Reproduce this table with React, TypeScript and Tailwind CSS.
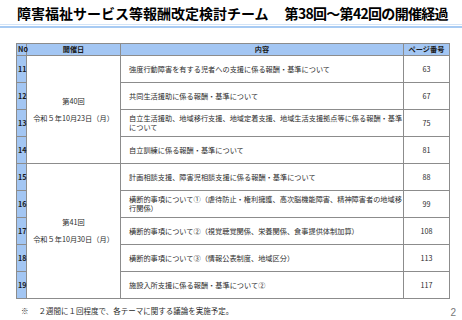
import React from "react";

type Row = { no: number; content: React.ReactNode; page: string };

const rowsA: Row[] = [
  { no: 11, content: "強度行動障害を有する児者への支援に係る報酬・基準について", page: "63" },
  { no: 12, content: "共同生活援助に係る報酬・基準について", page: "67" },
  {
    no: 13,
    content: (
      <>
        自立生活援助、地域移行支援、地域定着支援、地域生活支援拠点等に係る報酬・基準
        <br />
        について
      </>
    ),
    page: "75",
  },
  { no: 14, content: "自立訓練に係る報酬・基準について", page: "81" },
];

const rowsB: Row[] = [
  { no: 15, content: "計画相談支援、障害児相談支援に係る報酬・基準について", page: "88" },
  {
    no: 16,
    content: (
      <>
        横断的事項について①（虐待防止・権利擁護、高次脳機能障害、精神障害者の地域移
        <br />
        行関係）
      </>
    ),
    page: "99",
  },
  { no: 17, content: "横断的事項について②（視覚聴覚関係、栄養関係、食事提供体制加算）", page: "108" },
  { no: 18, content: "横断的事項について③（情報公表制度、地域区分）", page: "113" },
  { no: 19, content: "施設入所支援に係る報酬・基準について②", page: "117" },
];

const cell = "border border-[#8c8c8c]";

function Body({ rows, date }: { rows: Row[]; date: [string, string] }) {
  return (
    <>
      {rows.map((r, i) => (
        <tr key={r.no} className="h-[27px]">
          <td className={`${cell} bg-[#a3c6f3] pl-[1px] align-middle font-bold text-[#1a1a1a]`}>{r.no}</td>
          {i === 0 && (
            <td rowSpan={rows.length} className={`${cell} text-center align-middle`}>
              <div className="flex flex-col items-center gap-[8px]">
                <span>{date[0]}</span>
                <span>{date[1]}</span>
              </div>
            </td>
          )}
          <td className={`${cell} pl-[8px] leading-[9px] whitespace-nowrap`}>{r.content}</td>
          <td className={`${cell} text-center`}>{r.page}</td>
        </tr>
      ))}
    </>
  );
}

export default function App() {
  return (
    <div
      className="w-[462px] h-[320px] bg-white overflow-hidden"
      style={{ fontFamily: '"Noto Sans CJK JP", "Noto Sans", sans-serif' }}
    >
      <div className="pl-[17px] pt-[6px] h-[24px] text-[14px] leading-[14px] font-bold text-black whitespace-nowrap">
        障害福祉サービス等報酬改定検討チーム<span className="inline-block w-[16px]" />
        <span className="tracking-[-0.7px]">第38回～第42回の開催経過</span>
      </div>
      <div className="h-[1px] bg-[#d3e4f7]" />
      <div className="h-[1px]" />
      <div className="h-[2px] bg-[#a8cbf3]" />
      <div className="pl-[16px] pt-[15px]">
        <table className="border-collapse table-fixed w-[433px] text-[7.2px] leading-[9px] text-[#2b2b2b]">
          <colgroup>
            <col className="w-[10px]" />
            <col className="w-[94px]" />
            <col className="w-[283px]" />
            <col className="w-[46px]" />
          </colgroup>
          <thead>
            <tr className="h-[12px] bg-[#a3c6f3] font-bold text-[#1a1a1a]">
              <th className={`${cell} text-left pl-[1px]`}>No</th>
              <th className={cell}>開催日</th>
              <th className={cell}>内容</th>
              <th className={cell}>ページ番号</th>
            </tr>
          </thead>
          <tbody>
            <Body rows={rowsA} date={["第40回", "令和５年10月23日（月）"]} />
            <Body rows={rowsB} date={["第41回", "令和５年10月30日（月）"]} />
          </tbody>
        </table>
      </div>
      <div className="flex items-end justify-between pl-[21px] pr-[6px] pt-[7px]">
        <div className="text-[7.5px] leading-[10px] text-[#2b2b2b]">
          ※<span className="inline-block w-[10px]" />２週間に１回程度で、各テーマに関する議論を実施予定。
        </div>
        <div className="text-[10px] leading-[10px] text-[#777] translate-y-[2px]" style={{ fontFamily: '"Liberation Sans", sans-serif' }}>
          2
        </div>
      </div>
    </div>
  );
}
